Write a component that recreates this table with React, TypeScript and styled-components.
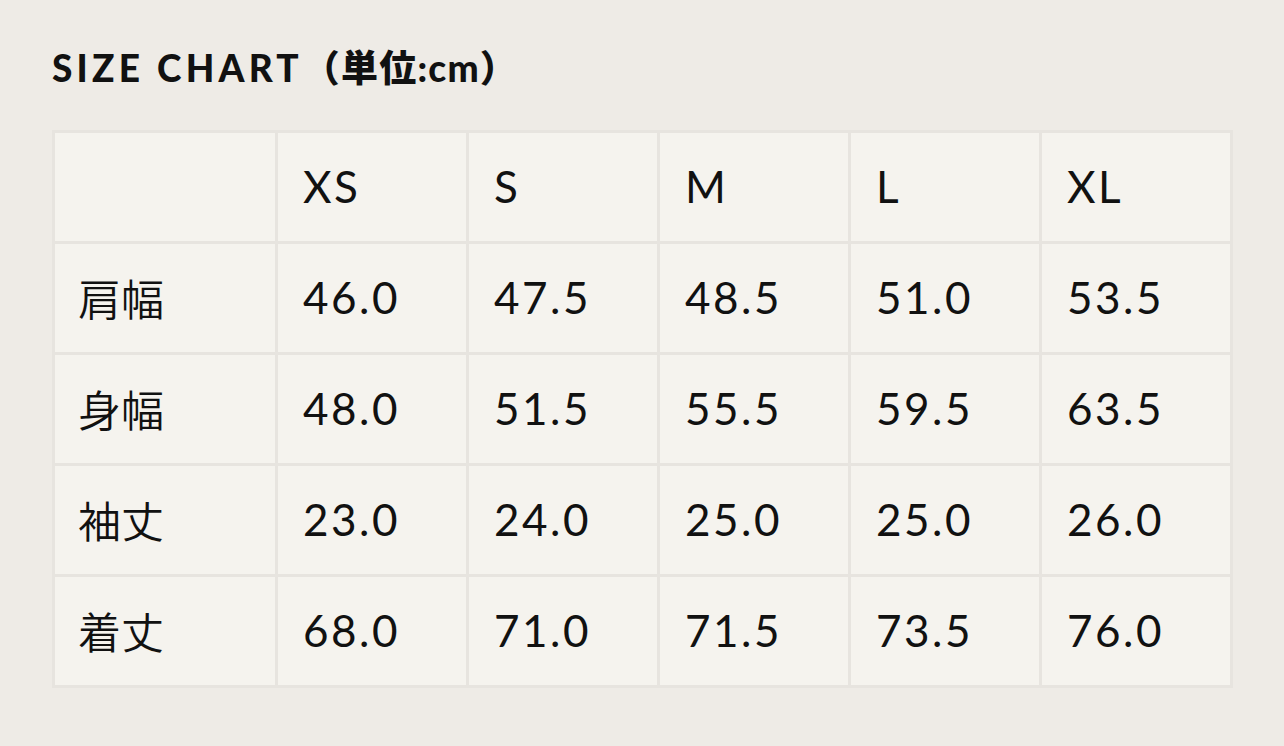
import React from "react";
import styled, { createGlobalStyle } from "styled-components";

const Global = createGlobalStyle`
  html, body { margin: 0; padding: 0; background: #eeebe6; }
  body { font-family: Lato, "Noto Sans CJK JP", sans-serif; color: #111; }
`;

const Page = styled.div`
  width: 1284px;
  height: 746px;
  box-sizing: border-box;
  padding: 46px 0 0 52px;
  background: #eeebe6;
`;

const Title = styled.h1`
  margin: 0 0 40px 0;
  font-family: Lato, "Noto Sans CJK JP", sans-serif;
  font-weight: 900;
  font-size: 37px;
  line-height: 44px;
  letter-spacing: 4.2px;
  color: #111;
`;

const Unit = styled.span`
  letter-spacing: 1.2px;
`;

const Grid = styled.div`
  display: grid;
  grid-template-columns: 220px repeat(5, 188px);
  grid-auto-rows: 108px;
  gap: 3px;
  padding: 3px;
  width: max-content;
  background: #e7e4df;
`;

const Cell = styled.div<{ $label?: boolean }>`
  background: #f5f3ee;
  display: flex;
  align-items: center;
  padding-left: ${(p) => (p.$label ? "23px" : "25px")};
  padding-bottom: 2px;
  font-family: ${(p) =>
    p.$label ? '"Noto Sans CJK JP", sans-serif' : 'Lato, "Noto Sans CJK JP", sans-serif'};
  font-size: ${(p) => (p.$label ? "43px" : "44px")};
  font-weight: ${(p) => (p.$label ? 350 : 400)};
  letter-spacing: ${(p) => (p.$label ? "0" : "2.5px")};
  color: #111;
`;

const sizes = ["XS", "S", "M", "L", "XL"];
const rows: [string, string[]][] = [
  ["肩幅", ["46.0", "47.5", "48.5", "51.0", "53.5"]],
  ["身幅", ["48.0", "51.5", "55.5", "59.5", "63.5"]],
  ["袖丈", ["23.0", "24.0", "25.0", "25.0", "26.0"]],
  ["着丈", ["68.0", "71.0", "71.5", "73.5", "76.0"]],
];

export default function App() {
  return (
    <>
      <Global />
      <Page>
        <Title>
          SIZE CHART<Unit>（単位:cm）</Unit>
        </Title>
        <Grid>
          <Cell $label />
          {sizes.map((s) => (
            <Cell key={s}>{s}</Cell>
          ))}
          {rows.map(([label, vals]) => (
            <React.Fragment key={label}>
              <Cell $label>{label}</Cell>
              {vals.map((v, i) => (
                <Cell key={i}>{v}</Cell>
              ))}
            </React.Fragment>
          ))}
        </Grid>
      </Page>
    </>
  );
}
